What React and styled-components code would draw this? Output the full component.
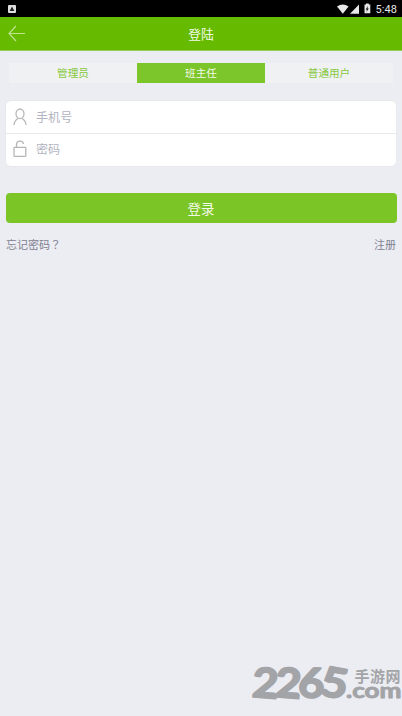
import React from "react";
import styled, { createGlobalStyle } from "styled-components";

const Global = createGlobalStyle`
  * { box-sizing: border-box; }
  html, body { margin: 0; background: #ecedf2; }
  body { font-family: Roboto, "Noto Sans CJK SC", sans-serif; overflow: hidden; }
`;

const Screen = styled.main`
  position: relative;
  display: flex;
  flex-direction: column;
  width: 402px;
  height: 716px;
  background: #ecedf2;
`;

const StatusBar = styled.div`
  display: flex;
  align-items: center;
  justify-content: space-between;
  height: 17px;
  padding: 1px 5px 0 8px;
  background: #000;
`;

const StatusIcons = styled.div`
  display: flex;
  align-items: center;
`;

const Clock = styled.span`
  margin-left: 3px;
  padding-top: 1px;
  color: #e6e6e6;
  font-size: 11px;
  line-height: 15px;
  letter-spacing: 0.1px;
`;

const Header = styled.header`
  display: grid;
  grid-template-columns: 40px 1fr 40px;
  align-items: center;
  height: 34px;
  background: #66bb00;
  border-bottom: 1px solid #94cb55;
`;

const BackButton = styled.button`
  display: flex;
  padding: 0 0 0 8px;
  border: 0;
  background: none;
`;

const Title = styled.h1`
  margin: 0;
  padding-top: 2px;
  color: #f3fae9;
  font-size: 12.8px;
  font-weight: 400;
  line-height: 20px;
  text-align: center;
`;

const Tabs = styled.nav`
  display: grid;
  grid-template-columns: repeat(3, 1fr);
  height: 20px;
  margin: 12px 9px 0;
`;

const Tab = styled.button`
  padding: 1px 0 0;
  border: 0;
  background: ${(p) => (p.$active ? "#7cc52a" : "#f0f1f2")};
  color: ${(p) => (p.$active ? "#f3fae9" : "#86c840")};
  font: 400 10.6px/19px Roboto, "Noto Sans CJK SC", sans-serif;
`;

const Fields = styled.div`
  display: flex;
  flex-direction: column;
  height: 67px;
  margin: 17px 5px 0;
  border: 1px solid #e8e9ec;
  border-radius: 6px;
  background: #fff;
  overflow: hidden;
`;

const Field = styled.label`
  display: flex;
  height: 32px;
  flex: none;
  align-items: center;
  padding-left: 7px;
  & + & {
    height: 30px;
    border-top: 1px solid #e8e9ec;
  }
`;

const Input = styled.input`
  flex: 1;
  min-width: 0;
  margin-left: 8px;
  padding: 2px 0 0;
  border: 0;
  outline: 0;
  background: none;
  font: 400 12.1px/20px Roboto, "Noto Sans CJK SC", sans-serif;
  &::placeholder { color: #b3b4bf; opacity: 1; }
`;

const Submit = styled.button`
  height: 30px;
  margin: 26px 5.5px 0;
  padding: 3px 0 0;
  border: 0;
  border-radius: 4px;
  background: #7cc527;
  color: #f3fae9;
  font: 400 13.4px/27px Roboto, "Noto Sans CJK SC", sans-serif;
`;

const Links = styled.div`
  display: flex;
  justify-content: space-between;
  margin: 12px 6px 0;
`;

const Link = styled.a`
  color: #7f8193;
  font-family: "Noto Sans CJK SC", sans-serif;
  font-size: 11px;
  line-height: 18px;
`;

const CenteredMark = styled.span`
  font-family: "Noto Sans CJK TC", sans-serif;
`;

const Watermark = styled.svg`
  position: absolute;
  right: 0;
  bottom: 0;
  fill: #a3a4a8;
  stroke: #a3a4a8;
  stroke-linejoin: round;
`;

const digits = [
  { char: "2", x: 252.5, y: 697.5, width: 26, turn: 4 },
  { char: "2", x: 275.5, y: 697.5, width: 26, turn: 4 },
  { char: "6", x: 298.5, y: 697.5, width: 26, turn: 3 },
  { char: "5", x: 321, y: 697, width: 27, turn: 10 },
];

export default function App() {
  return (
    <>
      <Global />
      <Screen>
        <StatusBar>
          <svg width="8" height="8" viewBox="0 0 8 8">
            <rect width="8" height="8" rx="1" fill="#dedede" />
            <path d="M4 1.5 6.4 6H1.6Z" fill="#222" />
          </svg>
          <StatusIcons>
            <svg width="35" height="12" viewBox="0 0 35 12" fill="#e8e8e8">
              <path d="M0 3.6Q5.7-.6 11.6 3.6L5.8 10.7Z" />
              <path d="M22 1.4V10.7H13Z" />
              <path d="M27.5 1.5H29V.5H31.8V1.5H33.3V10.3H27.5Z" />
              <path d="M31 2.7 28.7 6.5H30L29.4 9 31.8 5.4H30.4Z" fill="#111" />
            </svg>
            <Clock>5:48</Clock>
          </StatusIcons>
        </StatusBar>
        <Header>
          <BackButton aria-label="返回">
            <svg width="18" height="17" viewBox="0 0 18 17" fill="none" stroke="#c1e38f" strokeWidth="1.1">
              <path d="M8 1 1 8.5 8 16M1 8.5H17" />
            </svg>
          </BackButton>
          <Title>登陆</Title>
        </Header>
        <Tabs>
          <Tab>管理员</Tab>
          <Tab $active>班主任</Tab>
          <Tab>普通用户</Tab>
        </Tabs>
        <Fields>
          <Field>
            <svg width="15" height="18" viewBox="0 0 15 18" fill="none" stroke="#b6b6b6" strokeWidth="1.3">
              <ellipse cx="7" cy="5.8" rx="4" ry="4.8" />
              <path d="M.9 17C1.3 13.4 2.9 11.8 5 10.5M9 10.5C11.3 11.8 12.7 13.4 13.1 17" />
            </svg>
            <Input placeholder="手机号" />
          </Field>
          <Field>
            <svg width="15" height="18" viewBox="0 0 15 18" fill="none" stroke="#b6b6b6" strokeWidth="1.3">
              <rect x="1" y="7.3" width="11.8" height="9" rx=".5" />
              <path d="M3.5 7.3V4.7C3.5 .2 9.8-.1 10.5 4" />
            </svg>
            <Input type="password" placeholder="密码" />
          </Field>
        </Fields>
        <Submit>登录</Submit>
        <Links>
          <Link>忘记密码<CenteredMark lang="zh-TW">？</CenteredMark></Link>
          <Link>注册</Link>
        </Links>
        <Watermark width="160" height="60" viewBox="242 656 160 60">
          <g fontFamily="Lato" fontWeight="700" fontSize="41" strokeWidth="2">
            {digits.map((d) => (
              <text key={d.x} x={d.x} y={d.y} textLength={d.width} lengthAdjust="spacingAndGlyphs" transform={`rotate(${d.turn} ${d.x + 12} 683)`}>
                {d.char}
              </text>
            ))}
          </g>
          <text x="354.5" y="681.5" fontFamily="Noto Sans CJK SC" fontWeight="700" fontSize="15" textLength="46" strokeWidth="0">手游网</text>
          <text x="346" y="697.7" fontFamily="Lato" fontWeight="700" fontSize="21" textLength="55.5" lengthAdjust="spacingAndGlyphs" strokeWidth=".9">.com</text>
        </Watermark>
      </Screen>
    </>
  );
}
